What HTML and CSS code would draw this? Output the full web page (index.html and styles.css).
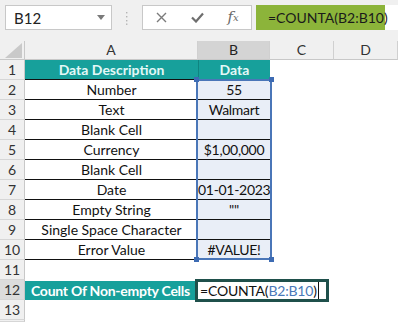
FILE: index.html
```html
<!DOCTYPE html>
<html lang="en">
<head>
    <meta charset="UTF-8">
    <title>COUNTA example</title>
    <link rel="stylesheet" href="styles.css">
</head>
<body>
    <div class="toolbar">
        <div class="name-box">
            <span>B12</span>
            <svg class="arrow" width="8" height="5" viewBox="0 0 8 5"><path d="M0 0 L8 0 L4 5 Z" fill="#7a7a7a"/></svg>
        </div>
        <svg class="grip" width="3" height="13" viewBox="0 0 3 13">
            <rect x="1" y="0" width="1.4" height="1.4" fill="#b4b4b4"/>
            <rect x="1" y="4" width="1.4" height="1.4" fill="#b4b4b4"/>
            <rect x="1" y="8" width="1.4" height="1.4" fill="#b4b4b4"/>
            <rect x="1" y="11.5" width="1.4" height="1.4" fill="#b4b4b4"/>
        </svg>
        <div class="icon-box">
            <span class="slot">
                <svg width="11" height="11" viewBox="0 0 11 11"><path d="M1 1 L10 10 M10 1 L1 10" stroke="#7b7b7b" stroke-width="1.4"/></svg>
            </span>
            <span class="slot">
                <svg width="13" height="11" viewBox="0 0 13 11"><path d="M1 5.5 L5 9.5 L12 1.5" stroke="#6e6e6e" stroke-width="2.2" fill="none"/></svg>
            </span>
            <span class="slot fx">f<sub>x</sub></span>
        </div>
        <div class="formula">
            <span class="formula-text">=COUNTA(B2:B10)</span>
        </div>
    </div>

    <div class="sheet">
        <div class="corner"><svg width="17" height="15" viewBox="0 0 17 15"><path d="M17 0 L17 15 L0 15 Z" fill="#c9c9c9"/></svg></div>
        <div class="col-head">A</div>
        <div class="col-head selected">B</div>
        <div class="col-head">C</div>
        <div class="col-head">D</div>

        <div class="row-head">1</div>
        <div class="cell title">Data Description</div>
        <div class="cell title data-title">Data</div>
        <div class="cell"></div><div class="cell"></div>

        <div class="row-head">2</div>
        <div class="cell lined">Number</div>
        <div class="cell lined ref">55</div>
        <div class="cell"></div><div class="cell"></div>

        <div class="row-head">3</div>
        <div class="cell lined">Text</div>
        <div class="cell lined ref">Walmart</div>
        <div class="cell"></div><div class="cell"></div>

        <div class="row-head">4</div>
        <div class="cell lined">Blank Cell</div>
        <div class="cell lined ref"></div>
        <div class="cell"></div><div class="cell"></div>

        <div class="row-head">5</div>
        <div class="cell lined">Currency</div>
        <div class="cell lined ref">$1,00,000</div>
        <div class="cell"></div><div class="cell"></div>

        <div class="row-head">6</div>
        <div class="cell lined">Blank Cell</div>
        <div class="cell lined ref"></div>
        <div class="cell"></div><div class="cell"></div>

        <div class="row-head">7</div>
        <div class="cell lined">Date</div>
        <div class="cell lined ref">01-01-2023</div>
        <div class="cell"></div><div class="cell"></div>

        <div class="row-head">8</div>
        <div class="cell lined">Empty String</div>
        <div class="cell lined ref">""</div>
        <div class="cell"></div><div class="cell"></div>

        <div class="row-head">9</div>
        <div class="cell lined">Single Space Character</div>
        <div class="cell lined ref"></div>
        <div class="cell"></div><div class="cell"></div>

        <div class="row-head">10</div>
        <div class="cell lined">Error Value</div>
        <div class="cell lined ref">#VALUE!</div>
        <div class="cell"></div><div class="cell"></div>

        <div class="row-head">11</div>
        <div class="cell"></div><div class="cell"></div><div class="cell"></div><div class="cell"></div>

        <div class="row-head active">12</div>
        <div class="cell count">Count Of Non-empty Cells</div>
        <div class="cell"></div><div class="cell"></div><div class="cell"></div>

        <div class="row-head">13</div>
        <div class="cell"></div><div class="cell"></div><div class="cell"></div><div class="cell"></div>

        <div class="row-head"></div>
        <div class="cell"></div><div class="cell"></div><div class="cell"></div><div class="cell"></div>

        <div class="range">
            <span class="handle tl"></span>
            <span class="handle tr"></span>
            <span class="handle bl"></span>
            <span class="handle br"></span>
        </div>

        <div class="editor">=COUNTA(<span class="ref-text">B2:B10</span>)<span class="caret"></span></div>
    </div>
</body>
</html>
```

FILE: styles.css
```css
* {
    margin: 0;
    padding: 0;
    box-sizing: border-box;
}

body {
    font-family: Lato, 'Open Sans', sans-serif;
    font-size: 14px;
    color: #111;
    background: #fff;
    width: 398px;
    height: 322px;
    overflow: hidden;
}

/* Formula bar */
.toolbar {
    height: 41px;
    background: #f0f0f0;
    display: flex;
    align-items: flex-start;
    padding-top: 5px;
}

.name-box {
    margin-left: 5px;
    width: 107px;
    height: 25px;
    background: #fff;
    border: 1px solid #c8c8c8;
    display: flex;
    align-items: center;
    justify-content: space-between;
    padding: 0 6px 0 8px;
    font-size: 15px;
    color: #222;
}

.grip {
    margin: 7px 14px 0 13px;
}

.icon-box {
    width: 110px;
    height: 25px;
    background: #fff;
    border: 1px solid #c8c8c8;
    display: flex;
    align-items: center;
}

.slot {
    width: 36px;
    display: flex;
    justify-content: center;
    align-items: center;
}

.fx {
    font-family: 'DejaVu Serif', 'Liberation Serif', serif;
    font-style: italic;
    font-size: 15px;
    color: #6a6a6a;
    line-height: 1;
}

.fx sub {
    font-size: 10px;
    vertical-align: -1px;
}

.formula {
    margin-left: 4px;
    flex: 1;
    height: 25px;
    background: #fff;
    display: flex;
}

.formula-text {
    width: 129px;
    background: #8cb43a;
    padding-left: 12px;
    font-size: 14px;
    line-height: 25px;
    color: #1a1a1a;
}

/* Grid */
.sheet {
    position: relative;
    display: grid;
    grid-template-columns: 25px 173px 72px 64px 64px;
    grid-template-rows: 19px repeat(13, 20px) 2px;
    background: #fff;
}

.corner {
    background: #f0f0f0;
    border-right: 1px solid #c8c8c8;
    border-bottom: 1px solid #c8c8c8;
    display: flex;
    align-items: center;
    justify-content: flex-end;
    padding-right: 2px;
}

.col-head {
    background: #f0f0f0;
    border-right: 1px solid #d0d0d0;
    border-bottom: 1px solid #c8c8c8;
    text-align: center;
    line-height: 18px;
    color: #333;
}

.col-head.selected {
    background: #d4d4d4;
    color: #222;
}

.row-head {
    background: #f0f0f0;
    border-right: 1px solid #c8c8c8;
    border-bottom: 1px solid #d6d6d6;
    text-align: center;
    line-height: 19px;
    color: #333;
    overflow: hidden;
}

.row-head.active {
    background: #dcdcdc;
}

.cell {
    text-align: center;
    line-height: 19px;
    white-space: nowrap;
    overflow: hidden;
}

.lined {
    border-bottom: 1px solid #111;
}

.title {
    background: #17a09b;
    color: #e4f8f7;
    font-weight: 700;
    border-bottom: 1px solid #111;
}

.data-title {
    border-left: 1px solid #0f8480;
}

.ref {
    background: #e9eef7;
    letter-spacing: -0.3px;
}

.count {
    background: #17a09b;
    color: #fff;
    font-weight: 700;
    margin-top: 1px;
    text-align: left;
    padding-left: 6px;
    letter-spacing: -0.25px;
}

/* Reference range B2:B10, laid over the cells */
.range {
    position: absolute;
    grid-column: 3 / 4;
    grid-row: 3 / 12;
    top: -1px;
    bottom: 0;
    left: -2px;
    right: -2px;
    border: 2px solid #4a76b8;
}

.handle {
    position: absolute;
    width: 5px;
    height: 5px;
    background: #3d6bb3;
}

.tl { left: -4px; top: -4px; }
.tr { right: -4px; top: -4px; }
.bl { left: -4px; bottom: -4px; }
.br { right: -4px; bottom: -4px; }

/* Cell being edited */
.editor {
    position: absolute;
    grid-column: 3 / 5;
    grid-row: 13 / 14;
    top: -1px;
    left: -3px;
    width: 134px;
    height: 23px;
    border: 3px solid #1f504b;
    background: #fff;
    padding-left: 2px;
    font-size: 14px;
    letter-spacing: -0.2px;
    color: #111;
    display: flex;
    align-items: center;
}

.ref-text {
    color: #4a78b8;
}

.caret {
    width: 1px;
    height: 17px;
    background: #111;
    margin-left: 1px;
}
```
